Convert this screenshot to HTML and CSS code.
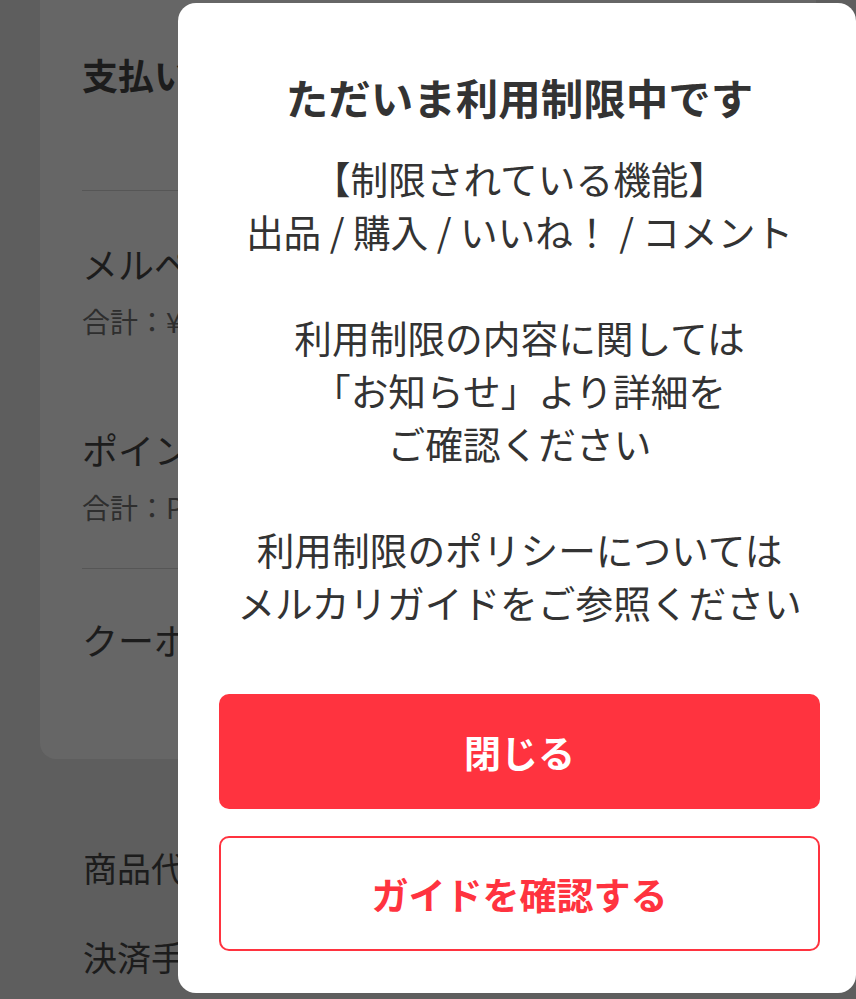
FILE: index.html
```html
<!DOCTYPE html>
<html lang="ja">
<head>
<meta charset="utf-8">
<title>利用制限</title>
<link rel="stylesheet" href="styles.css">
</head>
<body>
<div class="page">
  <div class="card">
    <div class="card-title">支払い方法</div>
    <div class="sep"></div>
    <div class="item first">メルペイ残高</div>
    <div class="sub">合計：¥0</div>
    <div class="item second">ポイント</div>
    <div class="sub">合計：P0</div>
    <div class="sep sep2"></div>
    <div class="item third">クーポン</div>
  </div>
  <div class="summary">
    <div class="sum-row">商品代金</div>
    <div class="sum-row next">決済手数料</div>
  </div>
</div>

<div class="modal">
  <h1 class="modal-title">ただいま利用制限中です</h1>
  <div class="modal-body">
    <p>【制限されている機能】<br>出品 / 購入 / いいね！ / コメント</p>
    <p>利用制限の内容に関しては<br>「お知らせ」より詳細を<br>ご確認ください</p>
    <p>利用制限のポリシーについては<br>メルカリガイドをご参照ください</p>
  </div>
  <div class="actions">
    <button class="btn btn-primary">閉じる</button>
    <button class="btn btn-outline">ガイドを確認する</button>
  </div>
</div>
</body>
</html>
```

FILE: styles.css
```css
html, body {
  margin: 0;
  padding: 0;
  background: #5e5e5e;
  font-family: "Noto Sans CJK JP", "Noto Sans", sans-serif;
  overflow: hidden;
}

.page {
  width: 856px;
  height: 999px;
}

.card {
  margin-left: 40px;
  width: 776px;
  background: #666666;
  border-radius: 0 0 16px 16px;
  padding: 49px 0 95px 42px;
  box-sizing: border-box;
  color: #1c1c1c;
}

.card-title {
  font-size: 36px;
  font-weight: 700;
  line-height: 50px;
  padding-bottom: 91px;
}

.sep {
  height: 1px;
  background: #565656;
}

.item {
  font-size: 36px;
  line-height: 50px;
}

.item.first { margin-top: 47px; }
.item.second { margin-top: 83px; }
.item.third { margin-top: 45px; }

.sub {
  font-size: 28px;
  line-height: 40px;
  margin-top: 13px;
  color: #2e2e2e;
}

.sep2 { margin-top: 41px; }

.summary {
  padding-left: 83px;
  color: #1c1c1c;
}

.sum-row {
  font-size: 34px;
  line-height: 48px;
  margin-top: 85px;
}

.sum-row.next { margin-top: 41px; }

.modal {
  position: fixed;
  left: 178px;
  top: 3px;
  width: 678px;
  height: 990px;
  background: #ffffff;
  border-radius: 18px;
  box-sizing: border-box;
  padding: 64px 36px 0 41px;
  display: flex;
  flex-direction: column;
  text-align: center;
  color: #333333;
}

.modal-title {
  margin: 0;
  font-size: 42.5px;
  font-weight: 700;
  line-height: 59px;
}

.modal-body {
  margin-top: 25px;
  font-size: 37.7px;
  line-height: 53px;
}

.modal-body p {
  margin: 0 0 53px 0;
}

.modal-body p:last-child {
  margin-bottom: 0;
}

.actions {
  margin-top: 66px;
  display: flex;
  flex-direction: column;
  gap: 27px;
}

.btn {
  font-family: "Noto Sans CJK JP", "Noto Sans", sans-serif;
  font-size: 37px;
  font-weight: 700;
  border-radius: 10px;
  height: 115px;
  width: 100%;
  cursor: pointer;
}

.btn-primary {
  background: #ff333f;
  color: #ffffff;
  border: none;
}

.btn-outline {
  background: #ffffff;
  color: #ff333f;
  border: 2px solid #ff333f;
  height: 115px;
}
```
